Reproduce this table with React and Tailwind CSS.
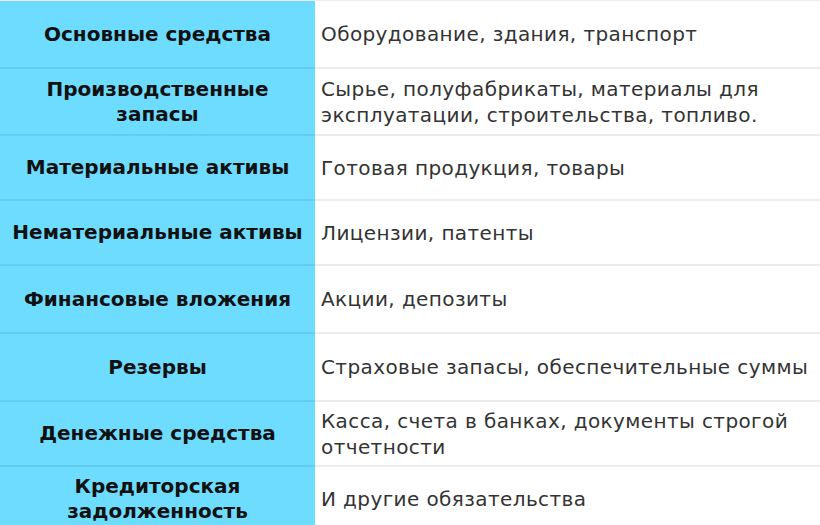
import React from "react";

const rows = [
  { h: "h-[66px]", left: ["Основные средства"], right: ["Оборудование, здания, транспорт"] },
  { h: "h-[67px]", left: ["Производственные", "запасы"], right: ["Сырье, полуфабрикаты, материалы для", "эксплуатации, строительства, топливо."] },
  { h: "h-[65px]", left: ["Материальные активы"], right: ["Готовая продукция, товары"] },
  { h: "h-[65px]", left: ["Нематериальные активы"], right: ["Лицензии, патенты"] },
  { h: "h-[68px]", left: ["Финансовые вложения"], right: ["Акции, депозиты"] },
  { h: "h-[68px]", left: ["Резервы"], right: ["Страховые запасы, обеспечительные суммы"] },
  { h: "h-[65px]", left: ["Денежные средства"], right: ["Касса, счета в банках, документы строгой", "отчетности"] },
  { h: "h-[66px]", left: ["Кредиторская", "задолженность"], right: ["И другие обязательства"] },
];

export default function App() {
  return (
    <div className="w-[820px] h-[525px] overflow-hidden bg-white font-['DejaVu_Sans',sans-serif]">
      <div className="flex flex-col border-t border-[#ececec]">
        {rows.map((row, i) => (
          <div key={i} className={`flex ${row.h}`}>
            {/* left label cell */}
            <div className={`w-[315px] shrink-0 bg-[#6ddcff] flex flex-col items-center justify-center text-center text-[20px] leading-[25px] font-bold text-[#111] ${i > 0 ? "border-t-2 border-[#62cdee]" : ""}`}>
              {row.left.map((t, j) => (
                <div key={j} className="whitespace-nowrap">{t}</div>
              ))}
            </div>
            {/* right value cell */}
            <div className={`flex-1 flex flex-col justify-center pl-[6px] text-[20px] leading-[26px] tracking-[0.4px] text-[#333] ${i > 0 ? "border-t-2 border-[#ececec]" : ""}`}>
              {row.right.map((t, j) => (
                <div key={j} className="whitespace-nowrap">{t}</div>
              ))}
            </div>
          </div>
        ))}
      </div>
    </div>
  );
}
